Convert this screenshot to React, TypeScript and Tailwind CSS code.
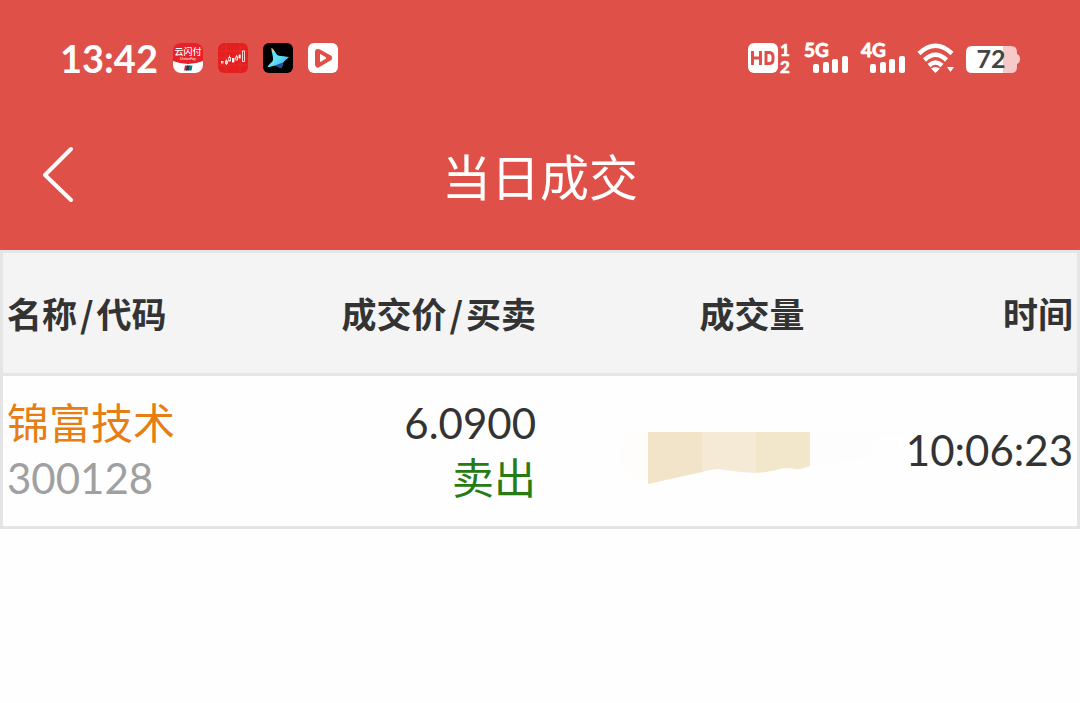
import { clsx } from 'clsx'

const latin = 'font-[Lato,"Noto_Sans_CJK_SC",sans-serif]'
const cjk = 'font-["Noto_Sans_CJK_SC",sans-serif]'

interface Trade {
	name: string
	code: string
	price: string
	side: string
	time: string
}

const trades: Trade[] = [
	{ name: '锦富技术', code: '300128', price: '6.0900', side: '卖出', time: '10:06:23' },
]

function UnionPayIcon() {
	return (
		<svg className="size-[30px] rounded-lg" viewBox="0 0 30 30">
			<rect width="30" height="30" fill="#e8202a" />
			<path d="M0 18Q15 24 30 18V30H0Z" fill="#fff" />
			<text x="15" y="12" fontSize="9" fontWeight="500" textAnchor="middle" fill="#fff">云闪付</text>
			<text x="15" y="17" fontSize="4" fontStyle="italic" textAnchor="middle" fill="#fff">UnionPay</text>
			<path d="M12 22.500h3l-1 5h-3z" fill="#d8232a" />
			<path d="M14 22.500h3l-1 5h-3z" fill="#17355f" />
			<path d="M16.500 22.500h3l-1 5h-3z" fill="#087b80" />
		</svg>
	)
}

function CandlesIcon() {
	return (
		<svg className="size-[30px] rounded-md" viewBox="0 0 30 30">
			<rect width="30" height="30" fill="#e3201f" />
			<path d="M0 8h30M0 15h30M0 22h30M8 0v30M22 0v30" stroke="#ea3a34" strokeWidth=".5" />
			<g fill="none" stroke="#fff" strokeWidth=".8">
				<path d="M8.500 16.500v5.500M11.500 12.500v2M18.500 12v2" />
				<rect x="3.500" y="18.500" width="1.500" height="1.500" />
				<rect x="7.500" y="18" width="2" height="2.500" />
				<rect x="10.700" y="14.500" width="1.800" height="3.500" />
				<rect x="14.500" y="15.500" width="1.500" height="3.500" fill="#fff" />
				<rect x="17.800" y="14" width="1.800" height="3" />
				<rect x="21" y="12" width="1.200" height="3" fill="#fff" />
				<rect x="24.500" y="8" width="2" height="10.500" />
			</g>
		</svg>
	)
}

function StarIcon() {
	return (
		<svg className="size-[30px] rounded-md" viewBox="0 0 30 30">
			<defs>
				<linearGradient id="star" x1="0" y1="0" x2="1" y2="1">
					<stop offset="0" stopColor="#58e4f1" />
					<stop offset=".5" stopColor="#63def8" />
					<stop offset="1" stopColor="#3a9be0" />
				</linearGradient>
			</defs>
			<rect width="30" height="30" fill="#000" />
			<path d="M8.500 5C10 5.500 13 11 15 12.500C19 13 23 13.500 26 14C24 16 21 18 20 20C19.500 23 19 25 17.500 25C16 25 14 22.500 12 22.500C9 23 6 24.500 4.500 24C5 22 9.500 19 10 17C10.500 13 8 8 8.500 5Z" fill="url(#star)" />
			<path d="M8.500 5C10 5.500 11 7.500 12 9L9.500 9Z" fill="#f1c36b" />
			<path d="M12 22.500L20 19.500C19.500 23 19 25 17.500 25C16 25 14 22.500 12 22.500Z" fill="#1b50a0" />
		</svg>
	)
}

function PlayIcon() {
	return (
		<svg className="size-[30px] rounded-md" viewBox="0 0 30 30">
			<rect width="30" height="30" fill="#fff" />
			<path d="M10 9L21 15L10 21.500Z" fill="#df5148" stroke="#df5148" strokeWidth="6" strokeLinejoin="round" />
			<path d="M12.500 11.500L18 15L12.500 18.500Z" fill="#fff" stroke="#fff" strokeLinejoin="round" />
		</svg>
	)
}

function HdIcon() {
	return (
		<svg className="h-[44px] w-[44px]" viewBox="0 0 44 44" fill="#fff">
			<rect y="7" width="30" height="30" rx="6" />
			<path d="M4.500 15v14M12.500 15v14M4.500 22h8M18 16.500h3q4 0 4 4v3q0 4-4 4h-3z" fill="none" stroke="#df5148" strokeWidth="3" />
			<g fontSize="17" fontWeight="700" textAnchor="middle" stroke="#fff" strokeWidth=".6">
				<text x="37" y="20">1</text>
				<text x="37" y="37">2</text>
			</g>
		</svg>
	)
}

function Signal({ label }: { label: string }) {
	return (
		<svg className="h-[44px] w-[46px]" viewBox="0 0 46 44" fill="#fff">
			<text x="1" y="21" fontSize="19" fontWeight="700" stroke="#fff" strokeWidth=".8">{label}</text>
			<rect x="10" y="28" width="6" height="9" rx="2" />
			<rect x="20" y="26" width="6" height="11" rx="2" />
			<rect x="29" y="23" width="6" height="14" rx="2" />
			<rect x="39" y="20" width="6" height="17" rx="2" />
		</svg>
	)
}

function Wifi() {
	return (
		<svg className="h-[32px] w-[38px]" viewBox="0 0 38 32" fill="none" stroke="#fff" strokeWidth="4.500">
			<path d="M2 11.500Q18.500-4 35 11.500" />
			<path d="M7.500 18Q18.500 7.500 29.500 18" />
			<path d="M12 23.500Q18.500 17.500 25 23.500" />
			<path d="M14 26.500Q18.500 23.500 23 26.500L18.500 31Z" fill="#fff" stroke="none" />
			<path d="M30 25h7l-3.500 5z" fill="#fff" stroke="none" />
		</svg>
	)
}

function Battery() {
	return (
		<svg className="h-[32px] w-[54px]" viewBox="0 0 54 32">
			<path d="M6 4H37V31H6Q0 31 0 25V10Q0 4 6 4Z" fill="#fff" />
			<path d="M37 4H45Q51 4 51 10V12Q54 13 54 17Q54 21 51 22V25Q51 31 45 31H37Z" fill="#f7c9c7" />
			<text x="25" y="26" fontSize="25" fontWeight="700" textAnchor="middle" fill="#444">72</text>
		</svg>
	)
}

function StatusBar() {
	return (
		<div className="flex h-[116px] items-center justify-between px-[60px]">
			<div className="flex items-center gap-[15px]">
				<span className="text-[38px] leading-none font-bold">13:42</span>
				<UnionPayIcon />
				<CandlesIcon />
				<StarIcon />
				<PlayIcon />
			</div>
			<div className="flex items-center gap-[11px]">
				<HdIcon />
				<Signal label="5G" />
				<Signal label="4G" />
				<Wifi />
				<Battery />
			</div>
		</div>
	)
}

function Slash() {
	return <span className="px-[3px]">/</span>
}

function Redaction() {
	return (
		<svg className="absolute top-[56px] left-[80px] h-[52px] w-[290px]" viewBox="0 0 290 52" aria-hidden="true">
			<path d="M28 0H16Q0 6 0 25Q2 46 28 51Z" fill="#fefdfb" />
			<path d="M190 0H285V3H256Q252 25 240 27L190 34Z" fill="#fdfdfd" />
			<path d="M28 0H82V40Q55 46 28 52Z" fill="#f2e4c8" />
			<path d="M82 0H136V41Q116 40 98 37Q92 37 82 40Z" fill="#f5ead5" />
			<path d="M136 0H190V34Q180 38 175 37Q166 35 160 37Q150 40 136 41Z" fill="#f2e7cb" />
		</svg>
	)
}

export default function App() {
	return (
		<div className={clsx('min-h-screen bg-[#fefefe] text-[#333]', latin)}>
			<header className="bg-[#df5148] pb-[18px] text-white">
				<StatusBar />
				<nav className="grid h-[116px] grid-cols-[1fr_auto_1fr] items-center">
					<button type="button" aria-label="返回" className="ml-10 w-9">
						<svg className="h-[58px] w-9" viewBox="0 0 36 58" fill="none" stroke="#fff" strokeWidth="4" strokeLinecap="round" strokeLinejoin="round">
							<path d="M31 4L5 30L31 55" />
						</svg>
					</button>
					<h1 className={clsx('text-[49px] leading-none font-normal', cjk)}>当日成交</h1>
				</nav>
			</header>
			<main className="border-[3px] border-[#e5e5e5]">
				<table className="w-full table-fixed">
					<thead>
						<tr className={clsx('h-[121px] bg-[#f4f4f4] text-[35px] whitespace-nowrap', cjk)}>
							<th className="px-1 text-left font-bold">
								名称
								<Slash />
								代码
							</th>
							<th className="px-1 text-right font-bold">
								成交价
								<Slash />
								买卖
							</th>
							<th className="px-1 text-right font-bold">成交量</th>
							<th className="px-1 text-right font-bold">时间</th>
						</tr>
					</thead>
					<tbody>
						{trades.map(trade => (
							<tr key={trade.code} className="h-[152px] border-t-[3px] border-[#e5e5e5] text-[42px] leading-[55px]">
								<td className="px-1">
									<div className="text-[#e67e14]">{trade.name}</div>
									<div className="text-[#a0a0a0]">{trade.code}</div>
								</td>
								<td className="px-1 text-right">
									<div>{trade.price}</div>
									<div className="text-[#267b13]">{trade.side}</div>
								</td>
								<td className="relative px-1">
									<Redaction />
								</td>
								<td className="relative px-1 text-right">{trade.time}</td>
							</tr>
						))}
					</tbody>
				</table>
			</main>
		</div>
	)
}
